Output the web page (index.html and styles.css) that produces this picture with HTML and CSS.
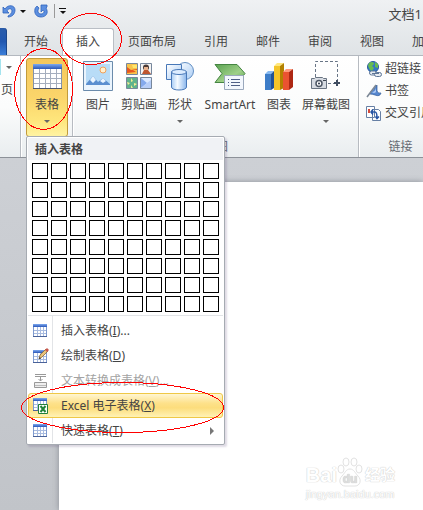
FILE: index.html
```html
<!DOCTYPE html>
<html lang="zh-CN">
<head>
    <meta charset="UTF-8">
    <meta name="viewport" content="width=device-width, initial-scale=1.0">
    <title>文档1</title>
    <link rel="stylesheet" href="styles.css">
</head>
<body>
    <svg class="defs" width="0" height="0">
        <defs>
            <linearGradient id="blue" x1="0" y1="0" x2="0" y2="1">
                <stop offset="0" stop-color="#7eaaf0"/><stop offset="1" stop-color="#2b57b8"/>
            </linearGradient>
            <linearGradient id="pale" x1="0" y1="0" x2="1" y2="1">
                <stop offset="0" stop-color="#ffffff"/><stop offset="1" stop-color="#a9ccf5"/>
            </linearGradient>
            <linearGradient id="tube" x1="0" y1="0" x2="1" y2="0">
                <stop offset="0" stop-color="#a9cdf5"/><stop offset=".4" stop-color="#f4faff"/><stop offset="1" stop-color="#8ab6ec"/>
            </linearGradient>
            <linearGradient id="green" x1="0" y1="0" x2="1" y2="1">
                <stop offset="0" stop-color="#5ba352"/><stop offset=".6" stop-color="#9fd088"/><stop offset="1" stop-color="#5ba352"/>
            </linearGradient>
            <symbol id="grid-icon" viewBox="0 0 14 14">
                <path fill="#fff" stroke="#7f9bd0" d="M.5.5h13v12H.5z"/>
                <path fill="url(#blue)" d="M0 0h14v3H0z"/>
                <path stroke="#a9bce0" fill="none" d="M1 6.500h12M1 9.500h12M4.500 3v9M7.500 3v9M10.500 3v9"/>
                <path stroke="#4a6299" d="M0 12.500h14"/>
            </symbol>
        </defs>
    </svg>

    <header class="titlebar">
        <div class="quick">
            <button class="undo" aria-label="撤消">
                <svg width="14" height="14" viewBox="0 0 14 14"><path d="M1 3v6h6L5 7c1-3 5-3 5 0 0 2-2 4-4 5v1c4 0 7-3 7-7C13 1 6 0 3 5z" fill="#5c8fe0" stroke="#2f62bb" stroke-width=".8"/></svg>
            </button>
            <button class="undo-list" aria-label="撤消列表"><i class="arrow dark"></i></button>
            <button class="redo" aria-label="恢复">
                <svg width="14" height="14" viewBox="0 0 14 14"><path d="M7 1h6v2l-1 1c3 5 0 9-5 9S0 9 1 5c0-1 1-2 2-3l2 2c-2 3-1 6 2 6s4-3 2-4L7 8z" fill="#5c8fe0" stroke="#2f62bb" stroke-width=".8"/></svg>
            </button>
            <button class="customize" aria-label="自定义快速访问工具栏"><i class="bar"></i><i class="arrow dark"></i></button>
        </div>
        <div class="doc-name">文档1</div>
    </header>

    <nav class="tabs">
        <button class="file-tab" aria-label="文件"></button>
        <button class="tab">开始</button>
        <button class="tab active">插入</button>
        <button class="tab">页面布局</button>
        <button class="tab">引用</button>
        <button class="tab">邮件</button>
        <button class="tab">审阅</button>
        <button class="tab">视图</button>
        <button class="tab">加载项</button>
    </nav>

    <section class="ribbon">
        <div class="group pages">
            <button class="cover" aria-label="封面"><i class="arrow"></i></button>
            <button class="blank">页</button>
        </div>
        <div class="group table-group">
            <button class="tool open">
                <svg width="30" height="30" viewBox="0 0 30 30">
                    <path fill="#fff" stroke="#8393ae" d="M1.500 3.500h28v24h-28z"/>
                    <path fill="url(#blue)" d="M1 3h29v5H1z"/>
                    <path stroke="#a5aebe" fill="none" d="M2 12.500h27M2 17.500h27M2 22.500h27M7.500 8v19M13.500 8v19M18.500 8v19M24.500 8v19"/>
                    <path stroke="#4d566b" d="M1 27.500h29"/>
                </svg>
                <span>表格</span><i class="arrow"></i>
            </button>
        </div>
        <div class="group art">
            <div class="tools">
                <button class="tool">
                    <svg width="30" height="30" viewBox="0 0 30 30">
                        <path fill="#eaf4fd" stroke="#6b8bab" d="M.5.5h29v29H.5z"/>
                        <path fill="#b8dcf7" d="M3 3h24v21H3z"/>
                        <circle cx="20" cy="9" r="3" fill="#fff0cf" stroke="#f0a05a"/>
                        <path fill="#5b8fd0" d="M3 23l7-8 5 6 5-4 7 6v1H3z"/>
                        <path fill="#e8f4ff" d="M7 19l3-4 3 4-3 3zM17 20l3-3 3 3-3 2z"/>
                    </svg>
                    <span>图片</span>
                </button>
                <button class="tool wide">
                    <svg width="28" height="30" viewBox="0 0 28 30">
                        <path fill="#f8c34a" stroke="#77879c" d="M1.500 2.500h11v11h-11z"/><path fill="#e9581f" d="M2 6l4 3 6-1v1H8l3 2-9 1z"/><path fill="#ffe66b" d="M7 4h5v3H8z"/>
                        <path fill="#f3f3f3" stroke="#77879c" d="M15.500 2.500h11v11h-11z"/><circle cx="21" cy="6.500" r="3" fill="#4b3a36"/><path fill="#e9b38e" d="M19 6h4v3h-4z"/><path fill="#be5530" d="M17 13l2-4h4l3 4z"/>
                        <path fill="#60b38b" stroke="#77879c" d="M1.500 16.500h11v11h-11z"/><path fill="#f7eb91" d="M6 17l2 3-2 1zM2 21l3 1-2 2zM9 22l3 1-3 2zM6 24l2 3H6z"/>
                        <path fill="#dbe9ff" stroke="#77879c" d="M15.500 16.500h11v11h-11z"/><path fill="#84a9ec" d="M16 17l6 5-6 5z"/><path fill="#b6cdf7" d="M22 22l4-3v8H16z"/>
                    </svg>
                    <span>剪贴画</span>
                </button>
                <button class="tool">
                    <svg width="30" height="30" viewBox="0 0 30 30">
                        <circle cx="20" cy="10" r="8.500" fill="url(#pale)" stroke="#628fc4"/>
                        <path fill="url(#pale)" stroke="#4878b8" d="M1.500 3.500h15v15h-15z"/>
                        <path fill="url(#tube)" stroke="#4878b8" d="M6.500 11v15c0 4 15 4 15 0V11z"/>
                        <ellipse cx="14" cy="11" rx="7.500" ry="2.500" fill="#dcecff" stroke="#4878b8"/>
                    </svg>
                    <span>形状</span><i class="arrow"></i>
                </button>
                <button class="tool widest">
                    <svg width="32" height="30" viewBox="0 0 32 30">
                        <path fill="url(#green)" stroke="#458542" d="M1 3.500h22l8 9-7 9H1l7-9z"/>
                        <path fill="#f3f7fd" stroke="#9aa8bc" d="M10.500 14.500h19v14h-19z"/>
                        <path stroke="#4f5f86" d="M17 18.500h9M17 21.500h9M17 24.500h9M14 18.500h1M14 21.500h1M14 24.500h1"/>
                    </svg>
                    <span>SmartArt</span>
                </button>
                <button class="tool chart">
                    <svg width="30" height="30" viewBox="0 0 30 30">
                        <path fill="#3d7dc8" d="M1 13h6v16H1z"/><path fill="#86b9f0" d="M1 13l3-3h6l-3 3z"/><path fill="#1f5296" d="M7 13l3-3v17l-3 2z"/>
                        <path fill="#f3c52a" d="M10 5h6v24h-6z"/><path fill="#ffe77c" d="M10 5l3-3h7l-4 3z"/><path fill="#b38100" d="M16 5l4-3v25l-4 2z"/>
                        <path fill="#ea5331" d="M19 11h6v18h-6z"/><path fill="#ff9a7c" d="M19 11l3-3h7l-4 3z"/><path fill="#ad2713" d="M25 11l4-3v18l-4 3z"/>
                    </svg>
                    <span>图表</span>
                </button>
                <button class="tool captures">
                    <svg width="32" height="30" viewBox="0 0 32 30">
                        <path fill="none" stroke="#687586" stroke-dasharray="3 2" d="M5.500 16V.5h22V19M18 22.500h7"/>
                        <path stroke="#3f4d60" stroke-width="2" d="M24 22h6M27 19v6"/>
                        <path fill="#d6dbe2" stroke="#697482" d="M1.500 17.500h3l1-1h7l1 1h3v10h-15z"/>
                        <circle cx="9" cy="22.500" r="3" fill="#fff" stroke="#4d5765" stroke-width="1.500"/><circle cx="9" cy="22.500" r="1" fill="#283447"/>
                        <path stroke="#3d4653" d="M13 19.500h3"/>
                    </svg>
                    <span>屏幕截图</span><i class="arrow"></i>
                </button>
            </div>
            <div class="group-name">插图</div>
        </div>
        <div class="group links">
            <div class="link-list">
                <button class="small">
                    <svg width="16" height="16" viewBox="0 0 16 16"><circle cx="7" cy="6" r="5.500" fill="#3478c5" stroke="#2859a0"/><path fill="#67bc50" d="M3 2c3-2 5-1 5 1L6 5l2 2-2 3c-3-1-3-4-4-5zM9 1l3 2v4L9 6z"/><rect x="3.500" y="10" width="7" height="4" rx="2" fill="#e7ecf2" stroke="#5d7596"/><rect x="8.500" y="11.500" width="7" height="4" rx="2" fill="#e7ecf2" stroke="#5d7596"/><path stroke="#5d7596" d="M6 12.500h7"/></svg>
                    超链接
                </button>
                <button class="small">
                    <svg width="16" height="16" viewBox="0 0 16 16"><path fill="#5687d0" stroke="#2d5796" stroke-width=".7" d="M5 8q3 0 5-5l1-1v6q1 3 4 2-1 4-6 2-3-1-5-1z"/><path fill="#a9c7f2" d="M6 9q3 0 4-4v4q-2 2-4 0z"/><path stroke="#7b8795" stroke-width="1.500" d="M1 14l9-12"/></svg>
                    书签
                </button>
                <button class="small">
                    <svg width="16" height="16" viewBox="0 0 16 16"><path fill="#fff" stroke="#6780a5" d="M.5 1.500h8v11h-8zM6.500 4.500h6l2 2v9h-8z"/><path stroke="#d44a3a" stroke-width="2" d="M3 4v4"/><path stroke="#2654a4" fill="none" stroke-width="1.500" d="M5 7h4q2 0 2 6M7 4.500L5 7l2 2.500M9.500 11.500l1.500 2 2-2"/></svg>
                    交叉引用
                </button>
            </div>
            <div class="group-name">链接</div>
        </div>
    </section>

    <main class="workspace">
        <div class="paper">
            <div class="watermark">
                <div class="brand">Bai<svg width="26" height="30" viewBox="0 0 26 30"><g fill="#fff" stroke="#e2e2e2"><ellipse cx="4" cy="12" rx="3" ry="4"/><ellipse cx="9" cy="5" rx="3" ry="4"/><ellipse cx="17" cy="5" rx="3" ry="4"/><ellipse cx="22" cy="12" rx="3" ry="4"/><path d="M13 12c-4 0-5 4-8 7-4 4-2 10 3 10h10c5 0 7-6 3-10-3-3-4-7-8-7z"/></g><text x="13" y="26" text-anchor="middle" class="du">du</text></svg><span>经验</span></div>
                <div class="site">jingyan.baidu.com</div>
            </div>
        </div>
    </main>

    <div class="menu">
        <div class="menu-title">插入表格</div>
        <div class="cells" id="cells"></div>
        <div class="items">
            <button class="item"><svg width="14" height="14"><use href="#grid-icon"/></svg><span>插入表格(<u>I</u>)...</span></button>
            <button class="item"><svg width="16" height="16" viewBox="0 0 16 16"><svg y="2" width="14" height="14"><use href="#grid-icon"/></svg><path fill="#e9c47c" stroke="#8a6a3c" stroke-width=".8" d="M6 11l1-4 6-6 2 2-6 6z"/><path fill="#c8574d" d="M12 2l2-2 2 2-2 2z"/><path fill="#333" d="M6 11l.5-2L8 10.500z"/></svg><span>绘制表格(<u>D</u>)</span></button>
            <button class="item" disabled><svg width="14" height="14" viewBox="0 0 14 14"><path stroke="#999" fill="none" d="M2 .5h11M2 2.500h11M7.500 2v5M5.500 5l2 2 2-2"/><path fill="#eee" stroke="#999" d="M1.500 8.500h12v5h-12z"/><path stroke="#bbb" d="M2 11.500h11"/></svg><span>文本转换成表格(<u>V</u>)...</span></button>
            <button class="item hot"><svg width="16" height="16" viewBox="0 0 16 16"><svg width="14" height="14"><use href="#grid-icon"/></svg><path fill="#fff" stroke="#23813a" d="M5.500 6.500h9v9h-9z"/><path stroke="#218339" stroke-width="2" d="M7.500 8l5 6M12.500 8l-5 6"/></svg><span>Excel 电子表格(<u>X</u>)</span></button>
            <button class="item"><svg width="14" height="14"><use href="#grid-icon"/></svg><span>快速表格(<u>T</u>)</span><i class="more"></i></button>
        </div>
    </div>

    <!-- red pen circles -->
    <svg class="marks" width="240" height="450" viewBox="0 0 240 450">
        <ellipse cx="91" cy="39" rx="30.500" ry="25.500"/>
        <ellipse cx="43.500" cy="89" rx="29" ry="40.500"/>
        <ellipse cx="122.500" cy="407.500" rx="101" ry="25"/>
    </svg>

    <script>
        var cells = document.getElementById('cells');
        for (var row = 1; row <= 8; row++) {
            for (var col = 1; col <= 10; col++) {
                var cell = document.createElement('button');
                cell.className = 'cell';
                cell.setAttribute('aria-label', col + 'x' + row);
                cells.appendChild(cell);
            }
        }
    </script>
</body>
</html>
```

FILE: styles.css
```css
* { box-sizing: border-box; }
body { margin: 0; min-height: 100vh; display: flex; flex-direction: column; position: relative; overflow: hidden; font: 12px/16px "Noto Sans", "Noto Sans CJK SC", sans-serif; color: #444; background: linear-gradient(#eff1f3, #dfe3e6 56px); }
button { font: inherit; color: inherit; background: none; border: none; padding: 0; margin: 0; white-space: nowrap; }
svg { display: block; flex: none; }
.defs { position: absolute; }
.arrow { width: 0; height: 0; border: 3px solid transparent; border-top-color: #666; border-bottom: 0; }
.arrow.dark { border-top-color: #111; }

.titlebar { height: 28px; display: flex; justify-content: space-between; overflow: hidden; }
.quick { display: flex; align-items: center; height: 22px; padding-left: 2px; }
.undo-list { padding: 0 4px; }
.undo-list .arrow, .customize .arrow { display: block; }
.redo { margin-left: 4px; }
.customize { margin-left: 6px; padding-left: 4px; border-left: 1px solid #999; height: 14px; display: flex; flex-direction: column; justify-content: center; align-items: center; gap: 2px; }
.customize .bar { width: 7px; height: 1px; background: #111; }
.doc-name { font-size: 13px; line-height: 28px; padding-right: 1px; }

.tabs { display: flex; height: 28px; overflow: hidden; border-bottom: 1px solid #b3b8bf; }
.file-tab { flex: none; width: 7px; margin-right: 3px; background: linear-gradient(#2a5caa, #2157b0 50%, #3b7ed8); border-radius: 0 3px 0 0; border-right: 1px solid #1c4689; }
.tab { flex: none; padding: 0 13px; border: 1px solid transparent; border-bottom: 0; height: 27px; }
.tab.active { background: #fff; border-color: #b9bec5; border-radius: 3px 3px 0 0; }

.ribbon { display: flex; height: 102px; overflow: hidden; background: linear-gradient(#fff, #fbfcfc 50%, #e9edef); border-bottom: 1px solid #8c9198; }
.group { flex: none; display: flex; flex-direction: column; border-right: 1px solid #b7bbc1; box-shadow: 1px 0 #fff; }
.pages { width: 21px; padding-top: 3px; align-items: flex-start; }
.cover { height: 16px; padding-left: 5px; border-left: 1px solid #a4e3ee; }
.cover .arrow { display: block; }
.blank { margin-top: 7px; padding-left: 1px; }
.table-group { padding: 2px 4px 0 5px; }
.art { padding: 2px 4px 0 5px; }
.tools { display: flex; }
.tool { width: 40px; height: 79px; padding-top: 3px; display: flex; flex-direction: column; align-items: center; border-radius: 3px; }
.tool span { margin-top: 6px; }
.tool .arrow { margin-top: 7px; }
.tool.open { width: 42px; padding-top: 2px; border: 1px solid #c29b3c; background: linear-gradient(#f4c75c, #fbd56b 50%, #fee67c 80%, #fff3a2); }
.tool.wide { width: 42px; }
.tool.widest { width: 60px; }
.tool.chart { width: 38px; }
.tool.captures { width: 56px; }
.group-name { text-align: center; color: #666b72; padding-top: 2px; }
.links { width: 84px; }
.link-list { display: flex; flex-direction: column; padding: 2px 0 0 7px; height: 81px; }
.small { display: flex; align-items: center; gap: 3px; height: 22px; }

.workspace { flex: 1; display: flex; padding: 24px 0 0 59px; background: linear-gradient(#cdd0d5, #c1c4c9 352px); }
.paper { flex: 1; display: flex; justify-content: flex-end; align-items: flex-end; background: #fff; box-shadow: 0 0 6px #8b8f96; }
.watermark { padding: 0 28px 9px 0; color: #fff; font-family: "Liberation Sans", "Noto Sans CJK SC", sans-serif; text-shadow: 0 0 1px #ccc, 0 0 1px #ccc; }
.brand { display: flex; align-items: flex-end; font-size: 20px; line-height: 24px; font-weight: bold; }
.brand span { font-size: 15px; padding-left: 2px; }
.du { font-size: 12px; fill: #ddd; }
.site { font-size: 11px; line-height: 14px; }

.menu { position: absolute; left: 26px; top: 136px; width: 199px; padding: 1px; background: #fff; border: 1px solid #a6abb2; border-radius: 2px; box-shadow: 2px 2px 2px rgba(90, 70, 120, .2); }
.menu-title { height: 22px; line-height: 24px; padding-left: 7px; font-weight: bold; background: #f0f2f5; }
.cells { display: grid; grid-template-columns: repeat(10, 16px); gap: 3px; padding: 3px 4px; }
.cell { height: 16px; border: 1px solid #000; background: #fff; }
.items { border-top: 1px solid #e2e4e7; padding-top: 2px; background: linear-gradient(#e2e4e7, #e2e4e7) 24px 0 / 1px 100% no-repeat; }
.item { position: relative; display: flex; align-items: center; width: 100%; height: 25px; padding-left: 4px; text-align: left; border: 1px solid transparent; border-radius: 3px; }
.item svg { margin-right: 12px; }
.item > svg[width="14"] { margin-right: 14px; }
.item:disabled { color: #a3a3a3; }
.item.hot { border-color: #efc846; background: linear-gradient(#fff6d2, #fde18a 40%, #fcdd7c 60%, #fff2b5); }
.more { margin-left: auto; margin-right: 8px; border: 4px solid transparent; border-left-color: #777; border-right: 0; }

.marks { position: absolute; left: 0; top: 0; pointer-events: none; fill: none; stroke: #f00; shape-rendering: crispEdges; }
```
